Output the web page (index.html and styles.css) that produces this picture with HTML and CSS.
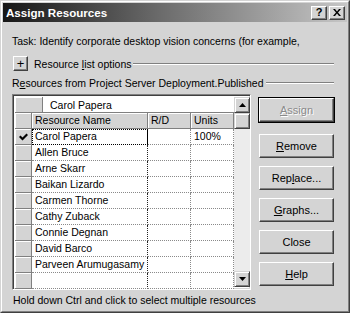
FILE: index.html
```html
<!DOCTYPE html>
<html>
<head>
<meta charset="utf-8">
<link rel="stylesheet" href="styles.css">
</head>
<body>
<div class="dialog">
  <div class="dialog-inner">
    <div class="titlebar">
      <span class="title">Assign Resources</span>
      <div class="tb-btns">
        <span class="tbtn">?</span>
        <span class="tbtn close">
          <svg width="8" height="7" viewBox="0 0 8 7"><path d="M0 0h2l2 2.5 2-2.5h2l-3 3.5 3 3.5h-2l-2-2.5-2 2.5h-2l3-3.5z" fill="#000"/></svg>
        </span>
      </div>
    </div>
    <div class="content">
      <div class="task">Task: Identify corporate desktop vision concerns (for example,</div>
      <div class="options">
        <span class="plus">+</span>
        <span class="opt-label">Resource <u>l</u>ist options</span>
        <span class="rule"></span>
      </div>
      <div class="group-label">
        <span>R<u>e</u>sources from Project Server Deployment.Published</span>
        <span class="rule"></span>
      </div>
      <div class="main">
        <div class="grid">
          <div class="table">
            <div class="row edit-row">
              <div class="sel wide"></div>
              <div class="edit-field">Carol Papera</div>
            </div>
            <div class="row head-row">
              <div class="sel"></div>
              <div class="hcell name">Resource Name</div>
              <div class="hcell rd">R/D</div>
              <div class="hcell units">Units</div>
            </div>
            <div class="row">
              <div class="sel"><svg width="9" height="8" viewBox="0 0 9 8"><path d="M0 4l1.5-1.5 2 2L7.5 0.5 9 2 3.5 7.5z" fill="#000"/></svg></div>
              <div class="cell name focus">Carol Papera</div>
              <div class="cell rd"></div>
              <div class="cell units">100%</div>
            </div>
            <div class="row"><div class="sel"></div><div class="cell name">Allen Bruce</div><div class="cell rd"></div><div class="cell units"></div></div>
            <div class="row"><div class="sel"></div><div class="cell name">Arne Skarr</div><div class="cell rd"></div><div class="cell units"></div></div>
            <div class="row"><div class="sel"></div><div class="cell name">Baikan Lizardo</div><div class="cell rd"></div><div class="cell units"></div></div>
            <div class="row"><div class="sel"></div><div class="cell name">Carmen Thorne</div><div class="cell rd"></div><div class="cell units"></div></div>
            <div class="row"><div class="sel"></div><div class="cell name">Cathy Zuback</div><div class="cell rd"></div><div class="cell units"></div></div>
            <div class="row"><div class="sel"></div><div class="cell name">Connie Degnan</div><div class="cell rd"></div><div class="cell units"></div></div>
            <div class="row"><div class="sel"></div><div class="cell name">David Barco</div><div class="cell rd"></div><div class="cell units"></div></div>
            <div class="row"><div class="sel"></div><div class="cell name">Parveen Arumugasamy</div><div class="cell rd"></div><div class="cell units"></div></div>
            <div class="row"><div class="sel"></div><div class="cell name"></div><div class="cell rd"></div><div class="cell units"></div></div>
          </div>
          <div class="scrollbar">
            <div class="sbtn"><svg width="7" height="4" viewBox="0 0 7 4"><path d="M3.5 0L7 4H0z" fill="#000"/></svg></div>
            <div class="thumb"></div>
            <div class="track"></div>
            <div class="sbtn"><svg width="7" height="4" viewBox="0 0 7 4"><path d="M0 0h7L3.5 4z" fill="#000"/></svg></div>
          </div>
        </div>
        <div class="buttons">
          <div class="btn default disabled"><span><u>A</u>ssign</span></div>
          <div class="btn"><span><u>R</u>emove</span></div>
          <div class="btn"><span>Rep<u>l</u>ace...</span></div>
          <div class="btn"><span><u>G</u>raphs...</span></div>
          <div class="btn"><span>Close</span></div>
          <div class="btn"><span><u>H</u>elp</span></div>
        </div>
      </div>
      <div class="status">Hold down Ctrl and click to select multiple resources</div>
    </div>
  </div>
</div>
</body>
</html>
```
FILE: styles.css
```css
* { box-sizing: border-box; margin: 0; padding: 0; }
body { margin: 0; background: #d4d4d4; font-family: "Liberation Sans", Arial, sans-serif; font-size: 10.5px; color: #000; }
u { text-decoration: underline; text-underline-offset: 1px; }

.dialog { width: 350px; height: 313px; border: 1px solid; border-color: #d4d4d4 #404040 #404040 #d4d4d4; background: #d4d4d4; }
.dialog-inner { height: 100%; border: 1px solid; border-color: #fff #808080 #808080 #fff; padding: 1px; display: flex; flex-direction: column; }

.titlebar { height: 19px; flex: none; background: linear-gradient(to right, #161616 0%, #6a6a6a 45%, #c6c6c6 100%); display: flex; align-items: center; justify-content: space-between; padding: 0 2px 0 3px; }
.title { color: #fff; font-weight: bold; font-size: 11.6px; }
.tb-btns { display: flex; gap: 2px; }
.tbtn { width: 16px; height: 14px; background: #d4d4d4; border: 1px solid; border-color: #fff #404040 #404040 #fff; box-shadow: inset -1px -1px 0 #808080; display: flex; align-items: center; justify-content: center; font-weight: bold; font-size: 11px; line-height: 1; }

.content { flex: 1; display: flex; flex-direction: column; padding: 0 13px 0 9px; }
.task { margin-top: 13px; height: 13px; line-height: 13px; white-space: nowrap; }
.options { margin-top: 8px; display: flex; align-items: center; height: 15px; }
.plus { width: 15px; height: 15px; flex: none; border: 1px solid; border-color: #fff #404040 #404040 #fff; box-shadow: inset -1px -1px 0 #808080; display: flex; align-items: center; justify-content: center; font-size: 13px; line-height: 1; padding-bottom: 1px; margin-left: 1px; }
.opt-label { margin-left: 6px; white-space: nowrap; }
.rule { flex: 1; height: 2px; border-top: 1px solid #808080; border-bottom: 1px solid #fff; margin-left: 2px; }
.group-label { margin-top: 5px; display: flex; align-items: center; height: 13px; white-space: nowrap; }

.main { margin-top: 5px; display: flex; }
.grid { width: 239px; height: 196px; border: 1px solid; border-color: #808080 #fff #fff #808080; box-shadow: inset 1px 1px 0 #404040, inset -1px -1px 0 #d4d4d4; padding: 2px 2px 2px 2px; display: flex; background: #fff; }
.table { width: 219px; display: flex; flex-direction: column; }
.row { height: 16px; display: flex; flex: none; }
.sel { width: 17px; flex: none; background: #d4d4d4; border-right: 1px solid #808080; border-bottom: 1px solid #808080; box-shadow: inset 1px 1px 0 #fff; display: flex; align-items: center; justify-content: center; }
.sel.wide { width: 28px; }
.edit-field { flex: 1; background: #fff; padding-left: 7px; line-height: 16px; border-bottom: 1px solid #808080; white-space: nowrap; }
.hcell { background: #d4d4d4; border-right: 1px solid #808080; border-bottom: 1px solid #808080; box-shadow: inset 1px 1px 0 #fff; line-height: 15px; padding-left: 3px; white-space: nowrap; }
.name { width: 116px; flex: none; }
.rd { width: 43px; flex: none; }
.units { width: 43px; flex: none; }
.cell { background: #fff; border-bottom: 1px dotted #8a8a8a; border-right: 1px dotted #8a8a8a; line-height: 15px; padding-left: 3px; white-space: nowrap; overflow: hidden; }
.cell.name { border-right: 1px dotted #222; }
.cell.focus { outline: 1px dotted #000; outline-offset: -1px; border-right: 1px solid #000; }

.scrollbar { width: 16px; flex: none; display: flex; flex-direction: column; }
.sbtn, .thumb { height: 16px; flex: none; background: #d4d4d4; border: 1px solid; border-color: #d4d4d4 #404040 #404040 #d4d4d4; box-shadow: inset 1px 1px 0 #fff, inset -1px -1px 0 #808080; display: flex; align-items: center; justify-content: center; }
.track { flex: 1; background: #ececec; }

.buttons { margin-left: 8px; display: flex; flex-direction: column; padding-top: 4px; }
.btn { width: 75px; height: 24px; flex: none; margin-bottom: 8px; background: #d4d4d4; border: 1px solid; border-color: #fff #404040 #404040 #fff; box-shadow: inset -1px -1px 0 #808080; display: flex; align-items: center; justify-content: center; white-space: nowrap; font-size: 11px; }
.btn.default { outline: 1px solid #000; margin-bottom: 12px; }
.btn.disabled span { color: #8a8a8a; text-shadow: 1px 1px 0 #fff; }
.status { margin-top: 0; height: 13px; line-height: 13px; white-space: nowrap; padding-left: 1px; }
```
